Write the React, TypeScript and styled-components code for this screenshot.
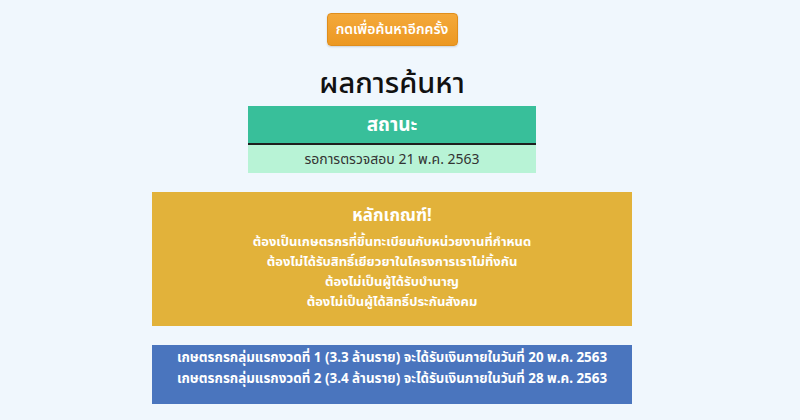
import React from 'react';
import styled, { createGlobalStyle } from 'styled-components';

const GlobalStyle = createGlobalStyle`
  html, body {
    margin: 0;
    padding: 0;
    background: #f0f7fd;
  }
  body {
    font-family: Tahoma, "Noto Sans", "Noto Sans Thai", "DejaVu Sans", sans-serif;
  }
`;

const Page = styled.div`
  width: 784px;
  padding-top: 13px;
  display: flex;
  flex-direction: column;
  align-items: center;
`;

const SearchAgain = styled.button`
  width: 131px;
  height: 33px;
  border: 1px solid #e08e1c;
  border-radius: 4px;
  background: linear-gradient(#f4a93a, #ec9822);
  color: #fff;
  font-family: inherit;
  font-size: 14px;
  font-weight: 600;
  cursor: pointer;
  box-shadow: 0 1px 2px rgba(0, 0, 0, 0.15);
`;

const Title = styled.h1`
  margin: 14px 0 0;
  height: 44px;
  line-height: 44px;
  font-size: 29px;
  font-weight: 500;
  color: #111;
`;

const StatusTable = styled.div`
  width: 288px;
  margin-top: 2px;
  display: flex;
  flex-direction: column;
`;

const StatusHead = styled.div`
  height: 37px;
  line-height: 37px;
  background: #38bf9a;
  border-bottom: 2px solid #1e1e1e;
  color: #fff;
  text-align: center;
  font-size: 19px;
  font-weight: 700;
`;

const StatusCell = styled.div`
  height: 28px;
  line-height: 28px;
  background: #b8f3d6;
  color: #333;
  text-align: center;
  font-size: 14px;
`;

const Notice = styled.div<{ $bg: string; $pad: string }>`
  width: 480px;
  box-sizing: border-box;
  margin-top: 19px;
  padding: ${p => p.$pad};
  background: ${p => p.$bg};
  color: #fff;
  text-align: center;
`;

const NoticeTitle = styled.div`
  font-size: 17px;
  font-weight: 700;
  line-height: 24px;
  margin-bottom: 4px;
`;

const NoticeLine = styled.div<{ $size: number; $lh: number }>`
  font-size: ${p => p.$size}px;
  font-weight: 700;
  line-height: ${p => p.$lh}px;
`;

const rules = [
  'ต้องเป็นเกษตรกรที่ขึ้นทะเบียนกับหน่วยงานที่กำหนด',
  'ต้องไม่ได้รับสิทธิ์เยียวยาในโครงการเราไม่ทิ้งกัน',
  'ต้องไม่เป็นผู้ได้รับบำนาญ',
  'ต้องไม่เป็นผู้ได้สิทธิ์ประกันสังคม',
];

const payouts = [
  'เกษตรกรกลุ่มแรกงวดที่ 1 (3.3 ล้านราย) จะได้รับเงินภายในวันที่ 20 พ.ค. 2563',
  'เกษตรกรกลุ่มแรกงวดที่ 2 (3.4 ล้านราย) จะได้รับเงินภายในวันที่ 28 พ.ค. 2563',
];

const App: React.FC = () => {
  return (
    <>
      <GlobalStyle />
      <Page>
        <SearchAgain>กดเพื่อค้นหาอีกครั้ง</SearchAgain>
        <Title>ผลการค้นหา</Title>
        <StatusTable>
          <StatusHead>สถานะ</StatusHead>
          <StatusCell>รอการตรวจสอบ 21 พ.ค. 2563</StatusCell>
        </StatusTable>
        <Notice $bg="#e2b23a" $pad="11px 0 15px">
          <NoticeTitle>หลักเกณฑ์!</NoticeTitle>
          {rules.map(r => (
            <NoticeLine key={r} $size={13} $lh={20}>{r}</NoticeLine>
          ))}
        </Notice>
        <Notice $bg="#4a75be" $pad="2px 0 15px">
          {payouts.map(p => (
            <NoticeLine key={p} $size={13.4} $lh={21}>{p}</NoticeLine>
          ))}
        </Notice>
      </Page>
    </>
  );
};

export default App;
